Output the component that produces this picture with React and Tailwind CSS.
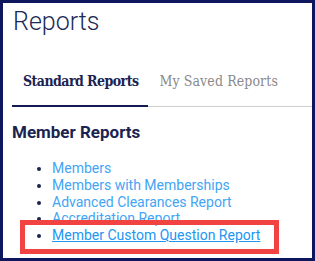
export default function App() {
  const items = [
    "Members",
    "Members with Memberships",
    "Advanced Clearances Report",
    "Accreditation Report",
  ];
  return (
    <div className="relative w-[315px] h-[261px] overflow-hidden border-[3px] border-[#0e175e] bg-white" style={{ fontFamily: "Roboto, 'Liberation Sans', sans-serif" }}>
      <div className="pt-[4px] pl-[10px] text-[25px] leading-[30px] font-light text-[#1c2a57]">Reports</div>
      <div className="mt-[34px] ml-[9px] flex border-b border-[#cfcfcf]" style={{ fontFamily: "'DejaVu Serif Condensed', 'DejaVu Serif', serif" }}>
        <div className="-mb-px pl-[11px] pr-[10px] pb-[14px] border-b-2 border-[#141b52] text-[14px] leading-[20px] font-bold tracking-[-0.55px] text-[#1b2350]">Standard Reports</div>
        <div className="pl-[11px] pr-[10px] text-[14px] leading-[20px] tracking-[0.1px] text-[#8a8a8a]">My Saved Reports</div>
      </div>
      <div className="mt-[15px] pl-[9px] text-[17px] leading-[20px] font-bold text-[#1b2350]">Member Reports</div>
      <ul className="mt-[18px] pl-[49px] list-disc text-[14px] leading-[16.75px] text-[#42a5f5] marker:text-[#1b2350]">
        {items.map((t) => (
          <li key={t}>{t}</li>
        ))}
        <li><span className="underline text-[#2196f3]">Member Custom Question Report</span></li>
      </ul>
      <div className="absolute left-[17px] top-[217px] w-[259px] h-[34px] border-[5px] border-[#f24343]" />
    </div>
  );
}
